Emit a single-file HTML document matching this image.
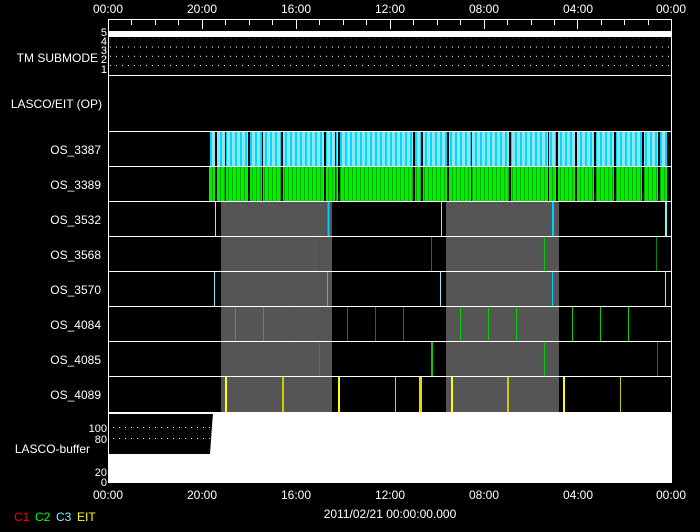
<!DOCTYPE html>
<html><head><meta charset="utf-8"><style>
html,body{margin:0;padding:0;background:#000;width:700px;height:532px;overflow:hidden}
svg{display:block;font-family:"Liberation Sans",sans-serif;font-size:12px}
</style></head><body>
<svg width="700" height="532" viewBox="0 0 700 532" xmlns="http://www.w3.org/2000/svg">
<defs>
<pattern id="dots" x="110" y="0" width="6" height="9.3" patternUnits="userSpaceOnUse"><rect x="0" y="0" width="1" height="1" fill="#fff"/></pattern>
<pattern id="cy" x="0" y="0" width="5" height="10" patternUnits="userSpaceOnUse"><rect width="5" height="10" fill="#8fe6f0"/><rect x="0" width="2" height="10" fill="#00d8ff"/></pattern>
<pattern id="gr" x="0" y="0" width="4" height="10" patternUnits="userSpaceOnUse"><rect width="4" height="10" fill="#00f000"/><rect x="0" width="1" height="10" fill="#00b000"/></pattern>
</defs>
<rect width="700" height="532" fill="#000"/>
<g fill="#fff" text-anchor="middle">
<text x="108" y="13">00:00</text><text x="202" y="13">20:00</text><text x="296" y="13">16:00</text><text x="390" y="13">12:00</text><text x="484" y="13">08:00</text><text x="578" y="13">04:00</text><text x="671" y="13">00:00</text>
<text x="108" y="499">00:00</text><text x="202" y="499">20:00</text><text x="296" y="499">16:00</text><text x="390" y="499">12:00</text><text x="484" y="499">08:00</text><text x="578" y="499">04:00</text><text x="671" y="499">00:00</text>
<text x="390" y="518">2011/02/21 00:00:00.000</text>
</g>
<g fill="#fff" text-anchor="end">
<text x="98" y="62">TM SUBMODE</text>
<text x="102" y="108">LASCO/EIT (OP)</text>
<text x="101" y="154">OS_3387</text><text x="101" y="189">OS_3389</text><text x="101" y="224">OS_3532</text><text x="101" y="259">OS_3568</text><text x="101" y="294">OS_3570</text><text x="101" y="329">OS_4084</text><text x="101" y="364">OS_4085</text><text x="101" y="399">OS_4089</text>
<text x="90" y="453">LASCO-buffer</text>
<g font-size="11"><text x="107" y="36">5</text><text x="107" y="45">4</text><text x="107" y="54">3</text><text x="107" y="63">2</text><text x="107" y="73">1</text>
<text x="107" y="432">100</text><text x="107" y="443">80</text><text x="107" y="476">20</text><text x="107" y="486">0</text></g>
</g>
<g><text x="14" y="521" fill="#f00">C1</text><text x="35" y="521" fill="#0f0">C2</text><text x="56" y="521" fill="#8ef">C3</text><text x="77" y="521" fill="#ff0">EIT</text></g>
<rect x="109" y="31" width="562" height="6" fill="#fff"/>
<rect x="110" y="38" width="560" height="30" fill="url(#dots)"/>
<rect x="210" y="132" width="457" height="34" fill="url(#cy)"/>
<rect x="209" y="167" width="458" height="34" fill="url(#gr)"/>
<g fill="#000"><rect x="215" y="132" width="2" height="69"/><rect x="225" y="132" width="1" height="69"/><rect x="248" y="132" width="2" height="69"/><rect x="262" y="132" width="1" height="69"/><rect x="281" y="132" width="2" height="69"/><rect x="324" y="132" width="2" height="69"/><rect x="335" y="132" width="1" height="69"/><rect x="338" y="132" width="2" height="69"/><rect x="413" y="132" width="2" height="69"/><rect x="421" y="132" width="2" height="69"/><rect x="447" y="132" width="2" height="69"/><rect x="471" y="132" width="1" height="69"/><rect x="509" y="132" width="2" height="69"/><rect x="548" y="132" width="1" height="69"/><rect x="556" y="132" width="2" height="69"/><rect x="575" y="132" width="2" height="69"/><rect x="594" y="132" width="2" height="69"/><rect x="614" y="132" width="2" height="69"/><rect x="642" y="132" width="2" height="69"/><rect x="658" y="132" width="2" height="69"/></g>
<rect x="221" y="202" width="111" height="210" fill="#555"/>
<rect x="446" y="202" width="113" height="210" fill="#555"/>
<g stroke-width="1">
<line x1="215.5" y1="201" x2="215.5" y2="236" stroke="#8ee"/><line x1="328.5" y1="201" x2="328.5" y2="236" stroke="#0cf" stroke-width="2"/><line x1="441.5" y1="201" x2="441.5" y2="236" stroke="#8ee"/><line x1="553" y1="201" x2="553" y2="236" stroke="#0cf" stroke-width="2"/><line x1="666" y1="201" x2="666" y2="236" stroke="#8ee" stroke-width="2"/>
<line x1="319.5" y1="236" x2="319.5" y2="271" stroke="#080"/><line x1="431.5" y1="236" x2="431.5" y2="271" stroke="#080"/><line x1="544.5" y1="236" x2="544.5" y2="271" stroke="#0c0"/><line x1="656.5" y1="236" x2="656.5" y2="271" stroke="#080"/>
<line x1="214.5" y1="271" x2="214.5" y2="306" stroke="#8ee"/><line x1="327.5" y1="271" x2="327.5" y2="306" stroke="#0cf"/><line x1="440.5" y1="271" x2="440.5" y2="306" stroke="#8ee"/><line x1="552.5" y1="271" x2="552.5" y2="306" stroke="#0cf"/><line x1="665.5" y1="271" x2="665.5" y2="306" stroke="#8ee"/>
<g stroke="#0c0"><line x1="235.5" y1="306" x2="235.5" y2="341"/><line x1="263.5" y1="306" x2="263.5" y2="341"/><line x1="291.5" y1="306" x2="291.5" y2="341" stroke="#080"/><line x1="347.5" y1="306" x2="347.5" y2="341" stroke="#080"/><line x1="375.5" y1="306" x2="375.5" y2="341" stroke="#080"/><line x1="403.5" y1="306" x2="403.5" y2="341" stroke="#080"/><line x1="460.5" y1="306" x2="460.5" y2="341"/><line x1="488.5" y1="306" x2="488.5" y2="341"/><line x1="516.5" y1="306" x2="516.5" y2="341"/><line x1="572.5" y1="306" x2="572.5" y2="341"/><line x1="600.5" y1="306" x2="600.5" y2="341"/><line x1="628.5" y1="306" x2="628.5" y2="341"/></g>
<line x1="319.5" y1="341" x2="319.5" y2="376" stroke="#0a0"/><line x1="432" y1="341" x2="432" y2="376" stroke="#0c0" stroke-width="2"/><line x1="544.5" y1="341" x2="544.5" y2="376" stroke="#0c0"/><line x1="657.5" y1="341" x2="657.5" y2="376" stroke="#080"/>
<g stroke="#ff0"><line x1="226" y1="376" x2="226" y2="412" stroke-width="2"/><line x1="283" y1="376" x2="283" y2="412" stroke="#cc0" stroke-width="2"/><line x1="339" y1="376" x2="339" y2="412" stroke-width="2"/><line x1="395.5" y1="376" x2="395.5" y2="412" stroke="#cc0"/><line x1="420.5" y1="376" x2="420.5" y2="412" stroke="#dd0" stroke-width="3"/><line x1="452" y1="376" x2="452" y2="412" stroke-width="2"/><line x1="508" y1="376" x2="508" y2="412" stroke="#cc0" stroke-width="2"/><line x1="564" y1="376" x2="564" y2="412" stroke-width="2"/><line x1="620.5" y1="376" x2="620.5" y2="412" stroke="#cc0"/></g>
</g>
<rect x="108" y="413" width="563" height="69" fill="#fff"/>
<polygon points="109,414 213,414 212,425 211,440 210,454 109,454" fill="#000"/>
<line x1="113" y1="427.5" x2="210" y2="427.5" stroke="#fff" stroke-dasharray="1 5"/>
<line x1="113" y1="438.5" x2="210" y2="438.5" stroke="#fff" stroke-dasharray="1 5"/>
<g stroke="#fff" fill="none">
<rect x="108.5" y="19.5" width="563" height="463"/>
<line x1="108" y1="75.5" x2="671" y2="75.5"/><line x1="108" y1="131.5" x2="671" y2="131.5"/><line x1="108" y1="166.5" x2="671" y2="166.5"/><line x1="108" y1="201.5" x2="671" y2="201.5"/><line x1="108" y1="236.5" x2="671" y2="236.5"/><line x1="108" y1="271.5" x2="671" y2="271.5"/><line x1="108" y1="306.5" x2="671" y2="306.5"/><line x1="108" y1="341.5" x2="671" y2="341.5"/><line x1="108" y1="376.5" x2="671" y2="376.5"/><line x1="108" y1="412.5" x2="671" y2="412.5"/>
<path d="M131.5 20v5M155.5 20v5M178.5 20v5M202.5 20v9M225.5 20v5M249.5 20v5M272.5 20v5M296.5 20v9M319.5 20v5M343.5 20v5M366.5 20v5M390.5 20v9M413.5 20v5M437.5 20v5M460.5 20v5M484.5 20v9M507.5 20v5M531.5 20v5M554.5 20v5M577.5 20v9M601.5 20v5M624.5 20v5M648.5 20v5"/>
</g>
</svg>
</body></html>
